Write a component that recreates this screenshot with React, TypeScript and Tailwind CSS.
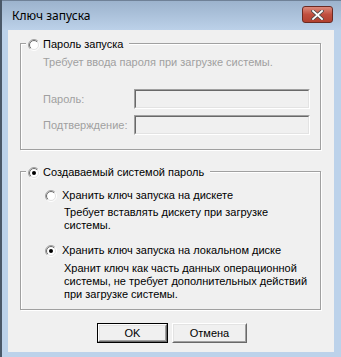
import React from 'react';

const font = { fontFamily: '"Liberation Sans", Arial, sans-serif' };

function Radio({ checked = false }: { checked?: boolean }) {
  return (
    <svg width="12" height="12" viewBox="0 0 12 12" className="shrink-0">
      <defs>
        <linearGradient id="ro" x1="0" y1="0" x2="1" y2="1">
          <stop offset="0.45" stopColor="#a0a0a0" />
          <stop offset="0.55" stopColor="#ffffff" />
        </linearGradient>
        <linearGradient id="ri" x1="0" y1="0" x2="1" y2="1">
          <stop offset="0.45" stopColor="#696969" />
          <stop offset="0.55" stopColor="#e3e3e3" />
        </linearGradient>
      </defs>
      <circle cx="6" cy="6" r="5.5" fill="none" stroke="url(#ro)" strokeWidth="1" />
      <circle cx="6" cy="6" r="4.5" fill="#ffffff" stroke="url(#ri)" strokeWidth="1" />
      {checked && <circle cx="6" cy="6" r="2" fill="#000000" />}
    </svg>
  );
}

function Edit() {
  return (
    <div className="w-[176px] h-[20px] bg-[#f0f0f0] border border-t-[#a0a0a0] border-l-[#a0a0a0] border-r-white border-b-white">
      <div className="h-full w-full border border-t-[#696969] border-l-[#696969] border-r-[#e3e3e3] border-b-[#e3e3e3]" />
    </div>
  );
}

function Button({ label, w, isDefault = false }: { label: string; w: string; isDefault?: boolean }) {
  return (
    <div className={`${w} h-[20px] ${isDefault ? 'border border-[#000]' : ''}`}>
      <div className="h-full w-full bg-[#f0f0f0] border border-t-white border-l-white border-r-[#696969] border-b-[#696969]">
        <div className="h-full w-full border border-t-[#e3e3e3] border-l-[#e3e3e3] border-r-[#a0a0a0] border-b-[#a0a0a0] flex items-center justify-center text-[11px] text-black leading-none">
          {label}
        </div>
      </div>
    </div>
  );
}

export default function App() {
  return (
    <div
      className="w-[341px] h-[357px] overflow-hidden bg-[#bcd2ea] border-l-2 border-[#4a5868] relative"
      style={font}
    >
      {/* title bar */}
      <div className="h-[30px] -ml-[2px] pl-[2px] bg-gradient-to-b from-[#9cb3cd] to-[#bcd1e9] flex items-center border-t border-[#6f8197]">
        <span
          className="ml-[10px] text-[12px] text-black"
          style={{ fontFamily: '"Noto Sans", "Open Sans", sans-serif' }}
        >
          Ключ запуска
        </span>
        <div className="ml-auto mr-[8px] mt-[-2px] w-[31px] h-[17px] rounded-[3px] border border-[#6b2a22] bg-gradient-to-b from-[#dc8a7c] via-[#c04f3f] to-[#b2402f] flex items-center justify-center">
          <svg width="13" height="10" viewBox="0 0 13 10">
            <path
              d="M2 1 L11 9 M11 1 L2 9"
              stroke="#4a4a4a"
              strokeWidth="3.4"
              strokeLinecap="square"
            />
            <path d="M2 1 L11 9 M11 1 L2 9" stroke="#ffffff" strokeWidth="1.8" strokeLinecap="square" />
          </svg>
        </div>
      </div>

      {/* client area */}
      <div className="ml-[6px] w-[326px] h-[322px] bg-[#f0f0f0] pt-[13px] pl-[12px] text-[11px] leading-[13px]">
        {/* group 1 */}
        <div className="w-[301px] h-[107px] border border-[#a0a0a0] shadow-[1px_1px_0_#fff,inset_1px_1px_0_#fff]">
          <div className="-mt-[6px] ml-[5px] flex items-center h-[13px] w-fit bg-[#f0f0f0] pl-[2px] pr-[6px]">
            <Radio />
            <span className="ml-[3px] text-black">Пароль запуска</span>
          </div>
          <div className="mt-[5px] ml-[22px] text-[#a0a0a0]">
            Требует ввода пароля при загрузке системы.
          </div>
          <div className="mt-[20px] ml-[22px] flex items-center text-[#a0a0a0]">
            <span className="w-[91px]">Пароль:</span>
            <Edit />
          </div>
          <div className="mt-[6px] ml-[22px] flex items-center text-[#a0a0a0]">
            <span className="w-[91px]">Подтверждение:</span>
            <Edit />
          </div>
        </div>

        {/* group 2 */}
        <div className="mt-[21px] w-[301px] h-[139px] border border-[#a0a0a0] shadow-[1px_1px_0_#fff,inset_1px_1px_0_#fff] text-black">
          <div className="-mt-[6px] ml-[5px] flex items-center h-[13px] w-fit bg-[#f0f0f0] pl-[2px] pr-[6px]">
            <Radio checked />
            <span className="ml-[3px]">Создаваемый системой пароль</span>
          </div>
          <div className="mt-[10px] ml-[24px] flex items-center h-[13px]">
            <Radio />
            <span className="ml-[5px]">Хранить ключ запуска на дискете</span>
          </div>
          <div className="mt-[4px] ml-[43px] whitespace-nowrap">
            Требует вставлять дискету при загрузке
            <br />
            системы.
          </div>
          <div className="mt-[12px] ml-[24px] flex items-center h-[13px]">
            <Radio checked />
            <span className="ml-[5px]">Хранить ключ запуска на локальном диске</span>
          </div>
          <div className="mt-[5px] ml-[43px] whitespace-nowrap">
            Хранит ключ как часть данных операционной
            <br />
            системы, не требует дополнительных действий
            <br />
            при загрузке системы.
          </div>
        </div>

        {/* buttons */}
        <div className="mt-[13px] ml-[77px] flex gap-[4px]">
          <Button label="OK" w="w-[71px]" isDefault />
          <Button label="Отмена" w="w-[75px]" />
        </div>
      </div>
    </div>
  );
}
